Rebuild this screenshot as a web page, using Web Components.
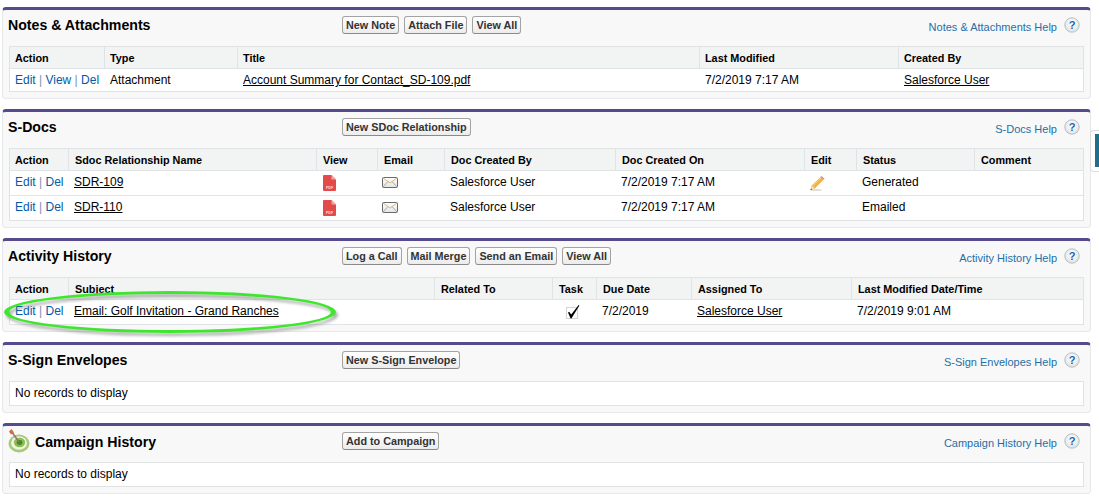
<!DOCTYPE html>
<html>
<head>
<meta charset="utf-8">
<title>Related lists</title>
<style>
  html, body { margin: 0; background: #fff; }
  body { font: 12px "Liberation Sans", Arial, sans-serif; color: #000; position: relative; height: 502px; overflow: hidden; }
  .stack { display: flex; flex-direction: column; gap: 10px; padding: 7px 8px 0 2px; }
</style>
</head>
<body>

<template id="panel-tpl">
  <style>
    :host { display: block; background: #f8f8f8; border: 1px solid #e6e7e8; border-top: 3px solid #544a8c; border-radius: 4px; }
    .head { display: grid; grid-template-columns: 339px 1fr auto; height: 36px; align-items: start; }
    .title { display: flex; align-items: center; gap: 5px; padding: 7px 0 0 5px; font-size: 14.15px; font-weight: bold; }
    .btns { display: flex; gap: 5px; padding-top: 6px; }
    .help { display: flex; gap: 7px; padding: 7px 10px 0 0; color: #1f6fa8; font-size: 11px; }
    .help span { padding-top: 4px; }
    .body { padding: 0 6px 6px 6px; }
    svg { display: block; }
    ::slotted([slot=icon]) { margin: -4px 0 -2px 0; }
  </style>
  <div class="head">
    <div class="title"><slot name="icon"></slot><span id="t"></span></div>
    <div class="btns"><slot name="buttons"></slot></div>
    <div class="help"><span id="h"></span>
      <svg width="16" height="16" viewBox="0 0 16 16"><defs><radialGradient id="q" cx=".5" cy=".4" r=".6"><stop offset="0" stop-color="#fff"/><stop offset="1" stop-color="#dfe3e6"/></radialGradient></defs><circle cx="8" cy="8" r="7.2" fill="url(#q)" stroke="#b9bdc1"/><text x="8" y="12" text-anchor="middle" font-family="Liberation Sans" font-weight="bold" font-size="11" fill="#1b66b5">?</text></svg>
    </div>
  </div>
  <div class="body"><slot></slot></div>
</template>

<template id="btn-tpl">
  <style>
    :host { display: inline-block; height: 18px; line-height: 16px; box-sizing: border-box; padding: 0 3px; border: 1px solid #a3a3a3; border-bottom-color: #8a8a8a; border-radius: 3px; background: linear-gradient(#fff, #ececec); color: #333; font-size: 10.8px; font-weight: bold; white-space: nowrap; }
  </style>
  <slot></slot>
</template>

<template id="table-tpl">
  <style>
    :host { display: block; background: #fff; border: 1px solid #e0e3e5; }
  </style>
  <slot></slot>
</template>

<template id="row-tpl">
  <style>
    :host { display: grid; grid-template-columns: var(--cols); height: var(--h, 22px); align-items: start; box-sizing: border-box; }
    :host([sep]) { height: 25px; border-bottom: 1px solid #e3e3e3; }
    :host([head]) { height: 22px; background: #f2f3f3; border-bottom: 1px solid #e0e3e5; font-weight: bold; font-size: 10.85px; }
    :host([head]) ::slotted(*) { height: 21px; line-height: 23px; padding: 0 0 0 var(--hp, 6px); border-left: 1px solid #e0e3e5; margin-left: -1px; }
    :host([head]) ::slotted(:first-child) { border-left: 0; margin-left: 0; padding-left: 5px; }
    ::slotted(*) { padding: 4px 0 0 5px; line-height: 14px; white-space: nowrap; min-width: 0; }
  </style>
  <slot></slot>
</template>

<template id="actions-tpl">
  <style>
    :host { display: block; color: #015ba7; }
    i { font-style: normal; color: #7f93a8; }
  </style>
  <span id="a"></span>
</template>

<div class="stack">
  <sf-panel heading="Notes &amp; Attachments" help="Notes &amp; Attachments Help">
    <sf-btn slot="buttons">New Note</sf-btn><sf-btn slot="buttons">Attach File</sf-btn><sf-btn slot="buttons">View All</sf-btn>
    <sf-table style="--cols:95px 133px 462px 199px 1fr;--hp:5px">
      <sf-row head><span>Action</span><span>Type</span><span>Title</span><span>Last Modified</span><span>Created By</span></sf-row>
      <sf-row><sf-actions links="Edit,View,Del"></sf-actions><span>Attachment</span><span><u>Account Summary for Contact_SD-109.pdf</u></span><span>7/2/2019 7:17 AM</span><span><u>Salesforce User</u></span></sf-row>
    </sf-table>
  </sf-panel>

  <sf-panel heading="S-Docs" help="S-Docs Help">
    <sf-btn slot="buttons">New SDoc Relationship</sf-btn>
    <sf-table style="--cols:59px 248px 61px 67px 171px 189px 52px 118px 1fr">
      <sf-row head><span>Action</span><span>Sdoc Relationship Name</span><span>View</span><span>Email</span><span>Doc Created By</span><span>Doc Created On</span><span>Edit</span><span>Status</span><span>Comment</span></sf-row>
      <sf-row sep><sf-actions links="Edit,Del"></sf-actions><span><u>SDR-109</u></span><span><sf-pdf></sf-pdf></span><span><sf-mail></sf-mail></span><span>Salesforce User</span><span>7/2/2019 7:17 AM</span><span><sf-pencil></sf-pencil></span><span>Generated</span><span></span></sf-row>
      <sf-row style="--h:24px"><sf-actions links="Edit,Del"></sf-actions><span><u>SDR-110</u></span><span><sf-pdf></sf-pdf></span><span><sf-mail></sf-mail></span><span>Salesforce User</span><span>7/2/2019 7:17 AM</span><span></span><span>Emailed</span><span></span></sf-row>
    </sf-table>
  </sf-panel>

  <sf-panel heading="Activity History" help="Activity History Help">
    <sf-btn slot="buttons">Log a Call</sf-btn><sf-btn slot="buttons">Mail Merge</sf-btn><sf-btn slot="buttons">Send an Email</sf-btn><sf-btn slot="buttons">View All</sf-btn>
    <sf-table style="--cols:59px 366px 118px 44px 95px 160px 1fr">
      <sf-row head><span>Action</span><span>Subject</span><span>Related To</span><span>Task</span><span>Due Date</span><span>Assigned To</span><span>Last Modified Date/Time</span></sf-row>
      <sf-row style="--h:24px"><sf-actions links="Edit,Del"></sf-actions><span><u>Email: Golf Invitation - Grand Ranches</u></span><span></span><span><sf-check></sf-check></span><span>7/2/2019</span><span><u>Salesforce User</u></span><span>7/2/2019 9:01 AM</span></sf-row>
    </sf-table>
  </sf-panel>

  <sf-panel heading="S-Sign Envelopes" help="S-Sign Envelopes Help">
    <sf-btn slot="buttons">New S-Sign Envelope</sf-btn>
    <sf-table style="--cols:1fr"><sf-row style="--h:23px"><span>No records to display</span></sf-row></sf-table>
  </sf-panel>

  <sf-panel heading="Campaign History" help="Campaign History Help">
    <sf-target slot="icon"></sf-target>
    <sf-btn slot="buttons">Add to Campaign</sf-btn>
    <sf-table style="--cols:1fr"><sf-row style="--h:23px"><span>No records to display</span></sf-row></sf-table>
  </sf-panel>
</div>

<sf-oval></sf-oval>
<sf-sidetab></sf-sidetab>

<script>
  function fromTpl(el, id) {
    el.attachShadow({ mode: 'open' }).appendChild(document.getElementById(id).content.cloneNode(true));
    return el.shadowRoot;
  }

  class SfPanel extends HTMLElement {
    connectedCallback() {
      const root = fromTpl(this, 'panel-tpl');
      root.getElementById('t').textContent = this.getAttribute('heading');
      root.getElementById('h').textContent = this.getAttribute('help');
    }
  }
  class SfBtn extends HTMLElement {
    connectedCallback() { fromTpl(this, 'btn-tpl'); }
  }
  class SfTable extends HTMLElement {
    connectedCallback() { fromTpl(this, 'table-tpl'); }
  }
  class SfRow extends HTMLElement {
    connectedCallback() { fromTpl(this, 'row-tpl'); }
  }
  class SfActions extends HTMLElement {
    connectedCallback() {
      const root = fromTpl(this, 'actions-tpl');
      root.getElementById('a').innerHTML = this.getAttribute('links').split(',').join(' <i>|</i> ');
    }
  }

  // small svg icons, each just a shadow root with one drawing
  function iconClass(markup, w, h, css = '') {
    return class extends HTMLElement {
      connectedCallback() {
        this.attachShadow({ mode: 'open' }).innerHTML =
          `<style>:host{display:block;width:${w}px;height:${h}px;${css}}svg{display:block;overflow:visible}</style>` + markup;
      }
    };
  }

  const pdf = `<svg width="13" height="16" viewBox="0 0 13 16"><path d="M0 1a1 1 0 0 1 1-1h7.5L13 4.5V15a1 1 0 0 1-1 1H1a1 1 0 0 1-1-1z" fill="#e34b4b"/><path d="M8.5 0L13 4.5H8.5z" fill="#f2a5a5"/><text x="6.5" y="14" text-anchor="middle" font-family="Liberation Sans" font-size="3.6" font-weight="bold" fill="#fbdcdc">PDF</text></svg>`;
  const mail = `<svg width="16" height="11" viewBox="0 0 16 11"><defs><linearGradient id="m" x2="0" y2="1"><stop offset="0" stop-color="#fff"/><stop offset="1" stop-color="#e4e4e4"/></linearGradient></defs><rect x=".5" y=".5" width="15" height="10" rx="1" fill="url(#m)" stroke="#6a6a6a"/><path d="M1 1l7 5 7-5" fill="none" stroke="#d9b779"/><path d="M1 10l5-5.5M15 10l-5-5.5" fill="none" stroke="#a9a9a9"/></svg>`;
  const pencil = `<svg width="15" height="15" viewBox="0 0 15 15"><ellipse cx="6" cy="14" rx="6" ry="1" fill="#ddd"/><path d="M.5 14l1.2-4.4L10.5 1l3 2.8-8.7 8.8z" fill="#f4b042"/><path d="M10.5 1l1-1 3 2.8-1 1z" fill="#e8826a"/><path d="M.5 14l1.2-4.4 3.1 3z" fill="#f6dfb5"/><path d="M.5 14l.5-1.8 1.3 1.2z" fill="#555"/><path d="M2.6 10l8.4-8.2" stroke="#fbd98f"/></svg>`;
  const check = `<svg width="14" height="14" viewBox="0 0 14 14"><rect x=".5" y="2.5" width="11" height="11" fill="none" stroke="#aaa" stroke-dasharray="1 1"/><path d="M2 7.5l1.2-.8 2 2.7L12.6 0l.8.5L5.4 13.5h-.8z" fill="#000"/></svg>`;
  const target = `<svg width="22" height="24" viewBox="0 0 22 24"><ellipse cx="11" cy="14.5" rx="10.5" ry="9" fill="#a9c97a"/><ellipse cx="11" cy="14" rx="8" ry="6.8" fill="#eef4df"/><ellipse cx="11.5" cy="13.5" rx="5.6" ry="4.8" fill="#8fbb55"/><ellipse cx="11.5" cy="13.5" rx="2.8" ry="2.4" fill="#3f8c2f"/><path d="M3.5 2.5l7.5 10.5" stroke="#8a7a64" stroke-width="1.5"/><path d="M1 2.5L3.5 0 6 3.5 3 5.5z" fill="#d8683d"/></svg>`;

  customElements.define('sf-panel', SfPanel);
  customElements.define('sf-btn', SfBtn);
  customElements.define('sf-table', SfTable);
  customElements.define('sf-row', SfRow);
  customElements.define('sf-actions', SfActions);
  customElements.define('sf-pdf', iconClass(pdf, 13, 16, 'margin:0 0 0 1px'));
  customElements.define('sf-mail', iconClass(mail, 16, 11, 'margin:2px 0 0 -1px'));
  customElements.define('sf-pencil', iconClass(pencil, 15, 15, 'margin:1px 0 0 0'));
  customElements.define('sf-check', iconClass(check, 14, 14, 'margin:1px 0 0 8px'));
  customElements.define('sf-target', iconClass(target, 22, 24));

  // the hand drawn highlight ring, it sits over the activity row
  class SfOval extends HTMLElement {
    connectedCallback() {
      const ring = 'M2 27a166 21 0 1 0 332 0a166 21 0 1 0 -332 0zM7 27a161 18 0 1 0 322 0a161 18 0 1 0 -322 0z';
      this.attachShadow({ mode: 'open' }).innerHTML = `
        <style>:host{position:absolute;left:2px;top:285px;width:345px;height:55px;pointer-events:none}</style>
        <svg width="345" height="55" viewBox="0 0 345 55">
          <defs><filter id="s" x="-5%" y="-30%" width="110%" height="170%"><feGaussianBlur stdDeviation="1.5"/></filter></defs>
          <path d="${ring}" fill="#666" fill-rule="evenodd" opacity=".55" filter="url(#s)" transform="translate(2 3)"/>
          <path d="${ring}" fill="#3fe62e" fill-rule="evenodd"/>
        </svg>`;
    }
  }
  customElements.define('sf-oval', SfOval);

  class SfSidetab extends HTMLElement {
    connectedCallback() {
      this.attachShadow({ mode: 'open' }).innerHTML = `
        <style>
          :host{position:absolute;left:1090px;top:130px;width:9px;height:42px;box-sizing:border-box;background:#fff;border:1px solid #ddd;border-right:0;border-radius:4px 0 0 4px;padding:3px 0 4px 4px}
          div{height:100%;background:#1f6f8b}
        </style><div></div>`;
    }
  }
  customElements.define('sf-sidetab', SfSidetab);
</script>
</body>
</html>
